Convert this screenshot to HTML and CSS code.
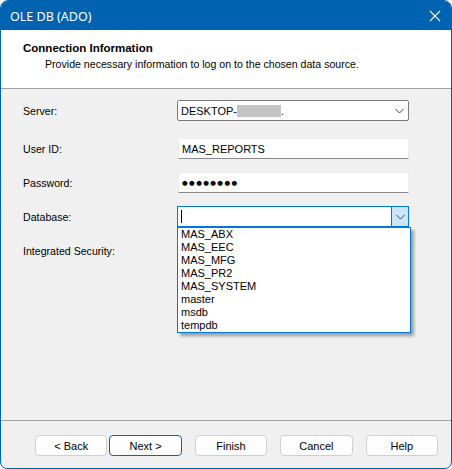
FILE: index.html
```html
<!DOCTYPE html>
<html>
  <head>
    <meta charset="UTF-8" />
    <title>OLE DB (ADO)</title>
    <link rel="stylesheet" href="styles.css">
  </head>
  <body>
    <div class="window">
      <div class="titlebar">
        <span class="title">OLE DB (ADO)</span>
        <svg class="close" width="12" height="12" viewBox="0 0 12 12">
          <path d="M1 1 L11 11 M11 1 L1 11" stroke="#fff" stroke-width="1.1" fill="none" />
        </svg>
      </div>

      <div class="header">
        <div class="header-title">Connection Information</div>
        <div class="header-sub">Provide necessary information to log on to the chosen data source.</div>
      </div>

      <div class="content">
        <div class="row">
          <label class="row-label">Server:</label>
          <div class="combo">
            <span class="combo-text">DESKTOP-<span class="blurred"></span>.</span>
            <span class="combo-arrow">
              <svg width="9" height="6" viewBox="0 0 9 6"><path d="M0.5 1 L4.5 5 L8.5 1" stroke="#444" fill="none" /></svg>
            </span>
          </div>
        </div>

        <div class="row">
          <label class="row-label">User ID:</label>
          <div class="textbox">MAS_REPORTS</div>
        </div>

        <div class="row">
          <label class="row-label">Password:</label>
          <div class="textbox password">●●●●●●●●</div>
        </div>

        <div class="row">
          <label class="row-label">Database:</label>
          <div class="combo combo-open">
            <span class="caret"></span>
            <span class="combo-arrow">
              <svg width="9" height="6" viewBox="0 0 9 6"><path d="M0.5 1 L4.5 5 L8.5 1" stroke="#444" fill="none" /></svg>
            </span>
            <ul class="dropdown">
              <li>MAS_ABX</li>
              <li>MAS_EEC</li>
              <li>MAS_MFG</li>
              <li>MAS_PR2</li>
              <li>MAS_SYSTEM</li>
              <li>master</li>
              <li>msdb</li>
              <li>tempdb</li>
            </ul>
          </div>
        </div>

        <div class="row">
          <label class="row-label">Integrated Security:</label>
        </div>
      </div>

      <div class="footer">
        <button class="btn btn-back">&lt; Back</button>
        <button class="btn btn-next">Next &gt;</button>
        <button class="btn">Finish</button>
        <button class="btn">Cancel</button>
        <button class="btn">Help</button>
      </div>
    </div>
  </body>
</html>
```

FILE: styles.css
```css
* {
  box-sizing: border-box;
  margin: 0;
  padding: 0;
}

body {
  font-family: 'Liberation Sans', Arial, sans-serif;
  font-size: 10.6px;
  color: #000;
  background: #fff;
}

.window {
  width: 452px;
  height: 469px;
  display: flex;
  flex-direction: column;
  border: 1px solid #0063b1;
  border-radius: 8px 8px 7px 7px;
  background: #f0f0f0;
  overflow: hidden;
}

/* title bar */
.titlebar {
  height: 29px;
  flex: none;
  display: flex;
  align-items: center;
  justify-content: space-between;
  padding: 0 9px 0 9px;
  background: #0063b1;
  color: #fff;
}

.title {
  font-family: 'Noto Sans', sans-serif;
  font-size: 12.5px;
  padding-top: 2px;
}

.close {
  margin-right: 1px;
}

/* white header band */
.header {
  height: 59px;
  flex: none;
  background: #fff;
  border-bottom: 1px solid #a0a0a0;
  padding: 11px 0 0 22px;
}

.header-title {
  font-weight: bold;
  font-size: 11.5px;
  line-height: 14px;
}

.header-sub {
  padding-left: 22px;
  line-height: 14px;
  margin-top: 2px;
}

/* form rows */
.content {
  flex: 1;
  padding: 11px 0 0 22px;
}

.row {
  display: flex;
  align-items: center;
  height: 21px;
  margin-bottom: 13px;
}

.row:first-child {
  margin-bottom: 17px;
}

.row-label {
  width: 154px;
  flex: none;
}

.combo,
.textbox {
  position: relative;
  width: 232px;
  height: 21px;
  background: #fff;
  display: flex;
  align-items: center;
  padding-left: 3px;
  font-size: 11px;
}

.combo {
  border: 1px solid #7a7a7a;
  border-radius: 2px;
}

.combo-text {
  flex: 1;
  display: flex;
  align-items: center;
}

.blurred {
  display: inline-block;
  width: 44px;
  height: 12px;
  background: #c4c4c4;
}

.combo-arrow {
  width: 17px;
  height: 100%;
  display: flex;
  align-items: center;
  justify-content: center;
  margin-left: auto;
}

.textbox {
  margin-left: 1px;
  width: 231px;
  border: 1px solid #ececec;
  border-bottom-color: #8a8a8a;
}

.password {
  font-family: 'DejaVu Sans', sans-serif;
  font-size: 6.5px;
  letter-spacing: 1.4px;
}

/* open database combo */
.combo-open {
  border-color: #0078d7;
  border-radius: 0;
}

.combo-open .combo-arrow {
  background: #cce4f7;
  border-left: 1px solid #0078d7;
}

.caret {
  width: 1px;
  height: 13px;
  background: #000;
}

.dropdown {
  position: absolute;
  top: 20px;
  left: -1px;
  width: 234px;
  list-style: none;
  background: #fff;
  border: 1px solid #0078d7;
  box-shadow: 3px 3px 3px rgba(0, 0, 0, 0.35);
  z-index: 2;
}

.dropdown li {
  height: 13px;
  line-height: 13px;
  padding-left: 3px;
}

/* buttons along the bottom */
.footer {
  height: 48px;
  flex: none;
  border-top: 1px solid #a0a0a0;
  display: flex;
  align-items: flex-start;
  padding: 14px 0 0 34px;
}

.btn {
  width: 73px;
  height: 21px;
  margin-right: 13px;
  font-family: 'Liberation Sans', Arial, sans-serif;
  font-size: 11px;
  color: #000;
  background: #fdfdfd;
  border: 1px solid #d0d0d0;
  border-radius: 4px;
}

.btn-back {
  margin-right: 2px;
}

.btn-next {
  border-color: #0067c0;
}
```
